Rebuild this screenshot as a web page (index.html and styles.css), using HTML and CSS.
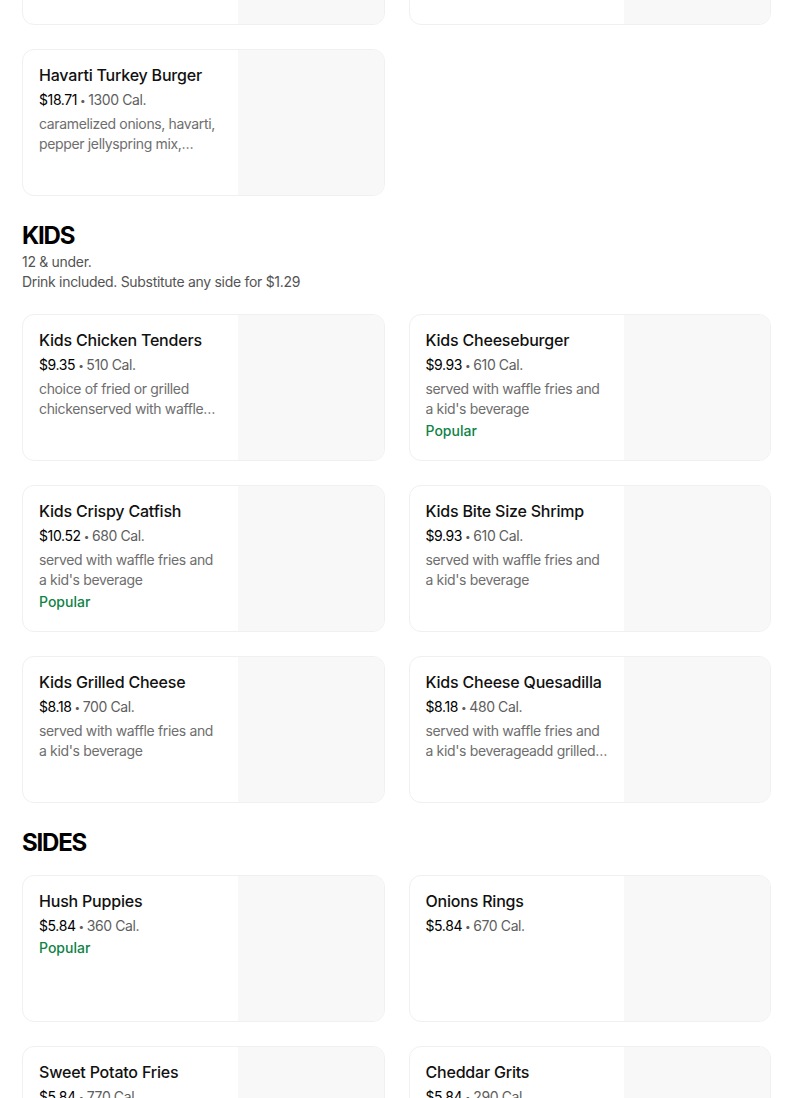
FILE: index.html
```html
<!DOCTYPE html>
<html>
<head>
<meta charset="utf-8">
<link rel="stylesheet" href="styles.css">
</head>
<body>
<main class="menu">
  <section class="section">
    <div class="grid">
      <article class="card"><div class="info"></div><div class="thumb"></div></article>
      <article class="card"><div class="info"></div><div class="thumb"></div></article>
      <article class="card">
        <div class="info">
          <h3 class="name">Havarti Turkey Burger</h3>
          <p class="meta"><span class="price">$18.71</span><span class="dot">•</span>1300 Cal.</p>
          <p class="desc">caramelized onions, havarti, pepper jellyspring mix,…</p>
        </div>
        <div class="thumb"></div>
      </article>
    </div>
  </section>

  <section class="section">
    <header class="head">
      <h2 class="title">KIDS</h2>
      <p class="sub">12 &amp; under.<br>Drink included. Substitute any side for $1.29</p>
    </header>
    <div class="grid">
      <article class="card">
        <div class="info">
          <h3 class="name">Kids Chicken Tenders</h3>
          <p class="meta"><span class="price">$9.35</span><span class="dot">•</span>510 Cal.</p>
          <p class="desc">choice of fried or grilled chickenserved with waffle…</p>
        </div>
        <div class="thumb"></div>
      </article>
      <article class="card">
        <div class="info">
          <h3 class="name">Kids Cheeseburger</h3>
          <p class="meta"><span class="price">$9.93</span><span class="dot">•</span>610 Cal.</p>
          <p class="desc">served with waffle fries and a kid's beverage</p>
          <p class="tag">Popular</p>
        </div>
        <div class="thumb"></div>
      </article>
      <article class="card">
        <div class="info">
          <h3 class="name">Kids Crispy Catfish</h3>
          <p class="meta"><span class="price">$10.52</span><span class="dot">•</span>680 Cal.</p>
          <p class="desc">served with waffle fries and a kid's beverage</p>
          <p class="tag">Popular</p>
        </div>
        <div class="thumb"></div>
      </article>
      <article class="card">
        <div class="info">
          <h3 class="name">Kids Bite Size Shrimp</h3>
          <p class="meta"><span class="price">$9.93</span><span class="dot">•</span>610 Cal.</p>
          <p class="desc">served with waffle fries and a kid's beverage</p>
        </div>
        <div class="thumb"></div>
      </article>
      <article class="card">
        <div class="info">
          <h3 class="name">Kids Grilled Cheese</h3>
          <p class="meta"><span class="price">$8.18</span><span class="dot">•</span>700 Cal.</p>
          <p class="desc">served with waffle fries and a kid's beverage</p>
        </div>
        <div class="thumb"></div>
      </article>
      <article class="card">
        <div class="info">
          <h3 class="name">Kids Cheese Quesadilla</h3>
          <p class="meta"><span class="price">$8.18</span><span class="dot">•</span>480 Cal.</p>
          <p class="desc">served with waffle fries and a kid's beverageadd grilled…</p>
        </div>
        <div class="thumb"></div>
      </article>
    </div>
  </section>

  <section class="section">
    <header class="head">
      <h2 class="title">SIDES</h2>
    </header>
    <div class="grid">
      <article class="card">
        <div class="info">
          <h3 class="name">Hush Puppies</h3>
          <p class="meta"><span class="price">$5.84</span><span class="dot">•</span>360 Cal.</p>
          <p class="tag">Popular</p>
        </div>
        <div class="thumb"></div>
      </article>
      <article class="card">
        <div class="info">
          <h3 class="name">Onions Rings</h3>
          <p class="meta"><span class="price">$5.84</span><span class="dot">•</span>670 Cal.</p>
        </div>
        <div class="thumb"></div>
      </article>
      <article class="card">
        <div class="info">
          <h3 class="name">Sweet Potato Fries</h3>
          <p class="meta"><span class="price">$5.84</span><span class="dot">•</span>770 Cal.</p>
        </div>
        <div class="thumb"></div>
      </article>
      <article class="card">
        <div class="info">
          <h3 class="name">Cheddar Grits</h3>
          <p class="meta"><span class="price">$5.84</span><span class="dot">•</span>290 Cal.</p>
        </div>
        <div class="thumb"></div>
      </article>
    </div>
  </section>
</main>
</body>
</html>
```

FILE: styles.css
```css
* { box-sizing: border-box; }
html, body { margin: 0; padding: 0; background: #fff; }
body {
  font-family: Inter, "Noto Sans", sans-serif;
  color: #000;
  overflow: hidden;
}
.menu {
  width: 749px;
  margin-left: 22px;
  margin-top: -122px;
}
.section { margin-bottom: 24px; }
.grid {
  display: grid;
  grid-template-columns: 1fr 1fr;
  gap: 24px;
}
.card {
  height: 147px;
  border: 1px solid #f0f0f0;
  border-radius: 12px;
  overflow: hidden;
  display: flex;
  background: #fff;
}
.info {
  flex: 1;
  min-width: 0;
  padding: 14px 16px 0 16px;
}
.thumb {
  width: 146px;
  flex: none;
  background: #f8f8f8;
}
.name {
  margin: 0;
  font-size: 16px;
  line-height: 22px;
  font-weight: 500;
  color: #111;
  letter-spacing: -0.2px;
  white-space: nowrap;
}
.meta {
  margin: 4px 0 0;
  font-size: 14px;
  line-height: 20px;
  color: #5e5e5e;
  letter-spacing: -0.4px;
}
.price { color: #000; }
.dot {
  font-size: 10px;
  margin: 0 3px;
  vertical-align: 1px;
  color: #5e5e5e;
}
.desc {
  margin: 4px 0 0;
  font-size: 14px;
  line-height: 20px;
  color: #6e6e6e;
  letter-spacing: -0.35px;
  display: -webkit-box;
  -webkit-line-clamp: 2;
  -webkit-box-orient: vertical;
  overflow: hidden;
}
.tag {
  margin: 2px 0 0;
  font-size: 14px;
  line-height: 20px;
  font-weight: 500;
  color: #0e8345;
}
.head { margin-bottom: 16px; }
.title {
  margin: 0;
  font-size: 24px;
  line-height: 32px;
  font-weight: 700;
  letter-spacing: -1.2px;
}
.sub {
  margin: 0;
  padding-bottom: 6px;
  font-size: 14px;
  line-height: 20px;
  color: #545454;
  letter-spacing: -0.3px;
}
```
